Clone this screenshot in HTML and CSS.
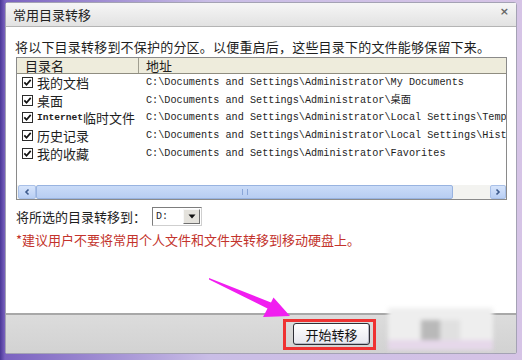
FILE: index.html
```html
<!DOCTYPE html>
<html lang="zh">
<head>
    <meta charset="UTF-8">
    <meta name="viewport" content="width=device-width, initial-scale=1.0">
    <title>常用目录转移</title>
    <link rel="stylesheet" href="styles.css">
</head>
<body>
    <div class="window">
        <div class="titlebar">
            <span class="title">常用目录转移</span>
            <span class="close">×</span>
        </div>
        <div class="content">
            <p class="intro">将以下目录转移到不保护的分区。以便重启后，这些目录下的文件能够保留下来。</p>
            <div class="listview">
                <div class="list-header">
                    <div class="col-name">目录名</div>
                    <div class="col-path">地址</div>
                </div>
                <div class="list-rows">
                    <div class="row">
                        <div class="cell-name"><svg class="chk" viewBox="0 0 11 11"><rect x="0.5" y="0.5" width="10" height="10" fill="#fff" stroke="#2b2b2b"/><path d="M2.3 5.4l2.2 2.3 4.2-4.8" fill="none" stroke="#111" stroke-width="1.7"/></svg>我的文档</div>
                        <div class="cell-path">C:\Documents and Settings\Administrator\My Documents</div>
                    </div>
                    <div class="row">
                        <div class="cell-name"><svg class="chk" viewBox="0 0 11 11"><rect x="0.5" y="0.5" width="10" height="10" fill="#fff" stroke="#2b2b2b"/><path d="M2.3 5.4l2.2 2.3 4.2-4.8" fill="none" stroke="#111" stroke-width="1.7"/></svg>桌面</div>
                        <div class="cell-path">C:\Documents and Settings\Administrator\桌面</div>
                    </div>
                    <div class="row">
                        <div class="cell-name"><svg class="chk" viewBox="0 0 11 11"><rect x="0.5" y="0.5" width="10" height="10" fill="#fff" stroke="#2b2b2b"/><path d="M2.3 5.4l2.2 2.3 4.2-4.8" fill="none" stroke="#111" stroke-width="1.7"/></svg><span class="latin">Internet</span>临时文件</div>
                        <div class="cell-path">C:\Documents and Settings\Administrator\Local Settings\Temp</div>
                    </div>
                    <div class="row">
                        <div class="cell-name"><svg class="chk" viewBox="0 0 11 11"><rect x="0.5" y="0.5" width="10" height="10" fill="#fff" stroke="#2b2b2b"/><path d="M2.3 5.4l2.2 2.3 4.2-4.8" fill="none" stroke="#111" stroke-width="1.7"/></svg>历史记录</div>
                        <div class="cell-path">C:\Documents and Settings\Administrator\Local Settings\Hist</div>
                    </div>
                    <div class="row">
                        <div class="cell-name"><svg class="chk" viewBox="0 0 11 11"><rect x="0.5" y="0.5" width="10" height="10" fill="#fff" stroke="#2b2b2b"/><path d="M2.3 5.4l2.2 2.3 4.2-4.8" fill="none" stroke="#111" stroke-width="1.7"/></svg>我的收藏</div>
                        <div class="cell-path">C:\Documents and Settings\Administrator\Favorites</div>
                    </div>
                </div>
                <div class="hscroll">
                    <div class="sb-btn"><svg viewBox="0 0 8 8"><path d="M5.5 1.5L3 4l2.5 2.5" fill="none" stroke="#3d5a8c" stroke-width="1.6"/></svg></div>
                    <div class="sb-thumb"><span class="grip"></span></div>
                    <div class="sb-track"></div>
                    <div class="sb-btn"><svg viewBox="0 0 8 8"><path d="M2.5 1.5L5 4 2.5 6.5" fill="none" stroke="#3d5a8c" stroke-width="1.6"/></svg></div>
                </div>
            </div>
            <div class="target-row">
                <span>将所选的目录转移到：</span>
                <div class="combo">
                    <span class="combo-value">D:</span>
                    <span class="combo-btn"><svg viewBox="0 0 8 5"><path d="M0.5 0.5h7L4 4.5z" fill="#111"/></svg></span>
                </div>
            </div>
            <p class="warning">*建议用户不要将常用个人文件和文件夹转移到移动硬盘上。</p>
        </div>
        <div class="footer">
            <div class="highlight">
                <button class="start-btn">开始转移</button>
            </div>
        </div>
    </div>

    <!-- 水印和标注箭头 -->
    <div class="watermark">
        <span class="wm-a"></span>
        <span class="wm-b"></span>
        <span class="wm-c"></span>
    </div>
    <svg class="arrow" viewBox="0 0 522 360">
        <polygon points="209,278 271,302.5 273.5,297.5 290,316 263,317 267.5,308.5 209,279.5" fill="#f11ef0"/>
    </svg>
</body>
</html>
```

FILE: styles.css
```css
* {
    margin: 0;
    padding: 0;
    box-sizing: border-box;
}
body {
    position: relative;
    width: 522px;
    height: 360px;
    overflow: hidden;
    padding: 2px 5px 6px 5px;
    background: linear-gradient(to right, #4a3796 0, #7a62c0 5px, #c9bde6 40%, #d6c4e6 100%);
    font-family: "Noto Sans CJK SC", sans-serif;
    color: #1e1e1e;
}
.window {
    height: 352px;
    display: flex;
    flex-direction: column;
    background: #fff;
    border: 1px solid #a4a2b4;
    border-radius: 3px 3px 2px 2px;
}
.titlebar {
    height: 24px;
    display: flex;
    align-items: center;
    justify-content: space-between;
    padding: 0 7px 0 7px;
    background: linear-gradient(#f6f6f6, #e2e2e2);
    border-bottom: 1px solid #b4b4b4;
}
.title {
    font-size: 13px;
    color: #222;
}
.close {
    font-family: "DejaVu Sans", sans-serif;
    font-size: 11px;
    color: #666;
    font-weight: bold;
    margin-top: -6px;
}
.content {
    flex: 1;
    padding: 11px 9px 0 9px;
}
.intro {
    font-size: 13px;
    line-height: 18px;
    letter-spacing: 0.2px;
}
/* 列表 */
.listview {
    height: 143px;
    margin: 1px 0 0 1px;
    border: 1px solid #8a8a8a;
    display: flex;
    flex-direction: column;
    overflow: hidden;
}
.list-header {
    display: flex;
    height: 16px;
    background: #eeecdc;
    border-bottom: 1px solid #8f8d80;
    font-size: 13px;
    line-height: 15px;
}
.col-name {
    width: 122px;
    padding-left: 8px;
    border-right: 1px solid #a09e90;
}
.col-path {
    padding-left: 7px;
}
.list-rows {
    flex: 1;
}
.row {
    display: grid;
    grid-template-columns: 129px 1fr;
    height: 17.6px;
    line-height: 17px;
    align-items: center;
    white-space: nowrap;
    overflow: hidden;
}
.cell-name {
    display: flex;
    align-items: center;
    padding-left: 5px;
    font-size: 13px;
}
.chk {
    width: 11px;
    height: 11px;
    margin-right: 4px;
    flex-shrink: 0;
}
.latin {
    font-family: "Liberation Mono", monospace;
    font-size: 9.6px;
    font-weight: bold;
}
.cell-path {
    font-family: "Liberation Mono", "Noto Sans CJK SC", monospace;
    font-size: 10.2px;
}
.hscroll {
    display: flex;
    height: 14px;
    background: #f3f3f0;
}
.sb-btn {
    width: 18px;
    margin: 0 0 0 1px;
    background: linear-gradient(#d6e4fb, #b9cff4);
    border: 1px solid #a9c0e8;
    border-radius: 2px;
    display: flex;
    align-items: center;
    justify-content: center;
}
.sb-btn:last-child {
    width: 16px;
    margin: 0;
}
.sb-btn svg {
    width: 8px;
    height: 8px;
}
.sb-thumb {
    width: 417px;
    background: linear-gradient(#c9dbf8, #b7cdf2);
    border: 1px solid #98b3e0;
    border-radius: 2px;
    display: flex;
    align-items: center;
    justify-content: center;
}
.grip {
    width: 6px;
    height: 6px;
    border-left: 1px solid #8aa6d8;
    border-right: 1px solid #8aa6d8;
}
.sb-track {
    flex: 1;
}
/* 目标分区 */
.target-row {
    display: flex;
    align-items: center;
    height: 20px;
    margin-top: 6px;
    padding-left: 1px;
    font-size: 13px;
}
.combo {
    width: 50px;
    height: 19px;
    margin-left: 6px;
    display: flex;
    align-items: center;
    justify-content: space-between;
    border: 1px solid #7d7d7d;
    border-right-color: #cfcfcf;
    border-bottom-color: #cfcfcf;
    padding: 1px;
}
.combo-value {
    font-family: "Liberation Mono", monospace;
    font-size: 10px;
    padding-left: 2px;
}
.combo-btn {
    width: 17px;
    height: 15px;
    background: #e4e2dc;
    border: 1px solid #f8f8f8;
    border-right-color: #6f6f6f;
    border-bottom-color: #6f6f6f;
    display: flex;
    align-items: center;
    justify-content: center;
}
.combo-btn svg {
    width: 8px;
    height: 5px;
}
.warning {
    margin-top: 6px;
    padding-left: 1px;
    font-size: 13px;
    line-height: 16px;
    color: #c3332c;
}
/* 底部按钮区 */
.footer {
    height: 40px;
    background: linear-gradient(#dcdcdc, #d2d2d2);
    border-top: 2px solid #a8a8a8;
    padding: 4px 0 0 277px;
}
.highlight {
    display: inline-block;
    border: 3px solid #ef3232;
    padding: 1px 3px 2px 7px;
}
.start-btn {
    display: block;
    width: 77px;
    height: 22px;
    font-family: "Noto Sans CJK SC", sans-serif;
    font-size: 13px;
    color: #111;
    background: linear-gradient(#ffffff, #e6e6ee);
    border: 1px solid #2e2e36;
    border-radius: 3px;
    box-shadow: inset -1px -1px 0 #b8b8c4;
}
.watermark {
    position: absolute;
    left: 388px;
    top: 308px;
    width: 105px;
    height: 42px;
    background: #eeeeee;
    filter: blur(2px);
}
.watermark span {
    position: absolute;
    top: 12px;
    height: 20px;
}
.wm-a {
    left: 33px;
    width: 19px;
    background: #b9b9b9;
}
.wm-b {
    left: 52px;
    width: 20px;
    background: #e0e0e0;
}
.wm-c {
    left: 0;
    top: 32px !important;
    width: 105px;
    height: 10px !important;
    background: #e6d8ea;
}
.arrow {
    position: absolute;
    left: 0;
    top: 0;
    width: 522px;
    height: 360px;
    pointer-events: none;
}
```
